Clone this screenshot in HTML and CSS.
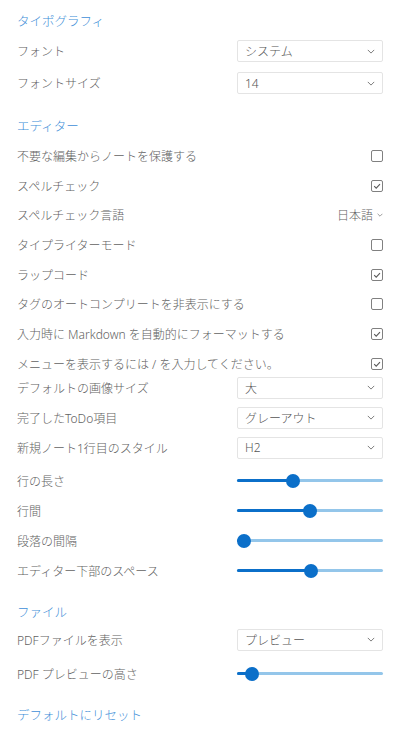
FILE: index.html
```html
<!DOCTYPE html>
<html>

<head>
    <meta charset="utf-8">
    <title>設定</title>
    <link rel="stylesheet" href="styles.css">
</head>

<body>
    <div class="page">

        <div class="heading first">タイポグラフィ</div>
        <div class="row tall">
            <span>フォント</span>
            <div class="select"><span>システム</span><svg class="chev" viewBox="0 0 10 6"><path d="M1 1l4 4 4-4"/></svg></div>
        </div>
        <div class="row tall">
            <span>フォントサイズ</span>
            <div class="select"><span>14</span><svg class="chev" viewBox="0 0 10 6"><path d="M1 1l4 4 4-4"/></svg></div>
        </div>

        <div class="heading">エディター</div>
        <div class="checks">
            <div class="row check">
                <span>不要な編集からノートを保護する</span>
                <span class="box"></span>
            </div>
            <div class="row check">
                <span>スペルチェック</span>
                <span class="box"><svg viewBox="0 0 10 10"><path d="M2.2 5.2l2 2 3.8-4"/></svg></span>
            </div>
            <div class="row check">
                <span>スペルチェック言語</span>
                <span class="lang">日本語<svg class="chev small" viewBox="0 0 10 6"><path d="M1 1l4 4 4-4"/></svg></span>
            </div>
            <div class="row check">
                <span>タイプライターモード</span>
                <span class="box"></span>
            </div>
            <div class="row check">
                <span>ラップコード</span>
                <span class="box"><svg viewBox="0 0 10 10"><path d="M2.2 5.2l2 2 3.8-4"/></svg></span>
            </div>
            <div class="row check">
                <span>タグのオートコンプリートを非表示にする</span>
                <span class="box"></span>
            </div>
            <div class="row check">
                <span>入力時に Markdown を自動的にフォーマットする</span>
                <span class="box"><svg viewBox="0 0 10 10"><path d="M2.2 5.2l2 2 3.8-4"/></svg></span>
            </div>
            <div class="row check">
                <span>メニューを表示するには / を入力してください。</span>
                <span class="box"><svg viewBox="0 0 10 10"><path d="M2.2 5.2l2 2 3.8-4"/></svg></span>
            </div>
        </div>

        <div class="selects">
            <div class="row">
                <span>デフォルトの画像サイズ</span>
                <div class="select"><span>大</span><svg class="chev" viewBox="0 0 10 6"><path d="M1 1l4 4 4-4"/></svg></div>
            </div>
            <div class="row">
                <span>完了したToDo項目</span>
                <div class="select"><span>グレーアウト</span><svg class="chev" viewBox="0 0 10 6"><path d="M1 1l4 4 4-4"/></svg></div>
            </div>
            <div class="row">
                <span>新規ノート1行目のスタイル</span>
                <div class="select"><span>H2</span><svg class="chev" viewBox="0 0 10 6"><path d="M1 1l4 4 4-4"/></svg></div>
            </div>
        </div>

        <div class="sliders">
            <div class="row">
                <span>行の長さ</span>
                <div class="slider"><div class="fill" style="width:56px"></div><div class="thumb" style="left:49px"></div></div>
            </div>
            <div class="row">
                <span>行間</span>
                <div class="slider"><div class="fill" style="width:73px"></div><div class="thumb" style="left:66px"></div></div>
            </div>
            <div class="row">
                <span>段落の間隔</span>
                <div class="slider"><div class="fill" style="width:6px"></div><div class="thumb" style="left:0px"></div></div>
            </div>
            <div class="row">
                <span>エディター下部のスペース</span>
                <div class="slider"><div class="fill" style="width:74px"></div><div class="thumb" style="left:67px"></div></div>
            </div>
        </div>

        <div class="heading file">ファイル</div>
        <div class="row pdf">
            <span>PDFファイルを表示</span>
            <div class="select"><span>プレビュー</span><svg class="chev" viewBox="0 0 10 6"><path d="M1 1l4 4 4-4"/></svg></div>
        </div>
        <div class="row pdf-slider">
            <span>PDF プレビューの高さ</span>
            <div class="slider"><div class="fill" style="width:15px"></div><div class="thumb" style="left:8px"></div></div>
        </div>

        <div class="heading reset">デフォルトにリセット</div>

    </div>
</body>
</html>
```

FILE: styles.css
```css
body {
    margin: 0;
    font-family: "Noto Sans", "Noto Sans CJK JP", sans-serif;
    font-size: 12px;
    font-weight: 300;
    color: #626262;
    background: #fff;
}

.page {
    padding: 0 17px;
}

.heading {
    height: 22px;
    line-height: 22px;
    color: #3f8fd8;
    font-size: 12.5px;
    margin-top: 17px;
}

.heading.first {
    margin-top: 11px;
    margin-bottom: 2px;
}

.heading.file {
    margin-top: 16px;
}

.heading.reset {
    margin-top: 16px;
}

.row {
    display: flex;
    justify-content: space-between;
    align-items: center;
    height: 30px;
}

.row.tall {
    height: 32px;
}

.checks {
    margin-top: 3px;
}

.row.check {
    height: 29.7px;
}

.selects {
    margin-top: -6px;
}

.sliders {
    margin-top: 3px;
}

.row.pdf {
    margin-top: 1px;
}

.row.pdf-slider {
    margin-top: 4px;
}

.select {
    box-sizing: border-box;
    width: 146px;
    height: 22px;
    border: 1px solid #e4e4e4;
    border-radius: 2px;
    display: flex;
    justify-content: space-between;
    align-items: center;
    padding: 0 7px 0 7px;
    color: #555;
}

.chev {
    width: 8px;
    height: 5px;
    fill: none;
    stroke: #777;
    stroke-width: 1.2;
}

.chev.small {
    width: 6px;
    height: 4px;
    margin-left: 4px;
}

.lang {
    display: flex;
    align-items: center;
}

.box {
    box-sizing: border-box;
    width: 12px;
    height: 12px;
    border: 1px solid #808080;
    border-radius: 2px;
    display: flex;
}

.box svg {
    width: 10px;
    height: 10px;
    fill: none;
    stroke: #5a5a5a;
    stroke-width: 1.1;
}

.slider {
    position: relative;
    width: 146px;
    height: 14px;
}

.slider::before {
    content: "";
    position: absolute;
    left: 0;
    right: 0;
    top: 5.5px;
    height: 3px;
    border-radius: 2px;
    background: #94c6ea;
}

.fill {
    position: absolute;
    left: 0;
    top: 5.5px;
    height: 3px;
    border-radius: 2px;
    background: #0b6fc9;
}

.thumb {
    position: absolute;
    top: 0;
    width: 14px;
    height: 14px;
    border-radius: 50%;
    background: #0b6fc9;
}
```
